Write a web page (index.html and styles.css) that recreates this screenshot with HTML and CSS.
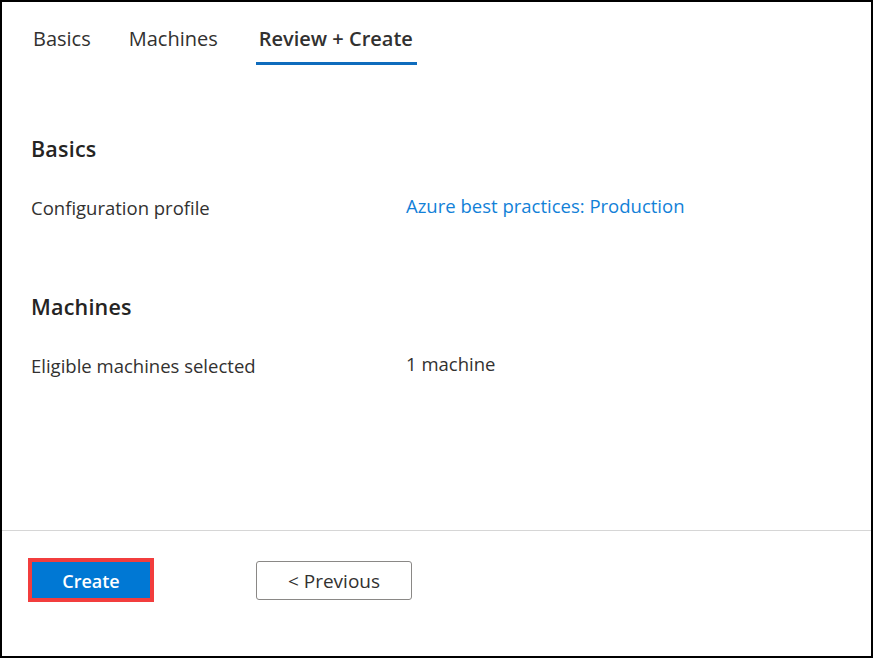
FILE: index.html
```html
<!DOCTYPE html>
<html>
<head>
<meta charset="utf-8">
<link rel="stylesheet" href="styles.css">
</head>
<body>
<div class="frame">
  <nav class="tabs">
    <span class="tab">Basics</span>
    <span class="tab">Machines</span>
    <span class="tab active">Review + Create</span>
  </nav>
  <main class="content">
    <section class="group">
      <h2 class="heading">Basics</h2>
      <div class="row">
        <span class="label">Configuration profile</span>
        <a class="value link">Azure best practices: Production</a>
      </div>
    </section>
    <section class="group">
      <h2 class="heading">Machines</h2>
      <div class="row">
        <span class="label">Eligible machines selected</span>
        <span class="value">1 machine</span>
      </div>
    </section>
  </main>
  <footer class="footer">
    <button class="btn primary">Create</button>
    <button class="btn secondary">&lt; Previous</button>
  </footer>
</div>
</body>
</html>
```
FILE: styles.css
```css
html, body {
  margin: 0;
  padding: 0;
  background: #fff;
}
body {
  font-family: "Open Sans", "Noto Sans", sans-serif;
  color: #323130;
}
.frame {
  box-sizing: border-box;
  width: 873px;
  height: 658px;
  border: 2px solid #000;
  display: flex;
  flex-direction: column;
}
.tabs {
  display: flex;
  padding: 0 0 0 28px;
  height: 63px;
  align-items: stretch;
  flex: none;
}
.tab {
  font-size: 20px;
  line-height: 27px;
  color: #323130;
  padding: 23px 3px 10px;
  margin-right: 32px;
  box-sizing: border-box;
  height: 63px;
}
.tab.active {
  font-weight: 600;
  margin-left: 3px;
  padding: 23px 4px 10px 3px;
  border-bottom: 3px solid #0f6cbd;
}
.content {
  flex: 1;
  padding: 0 0 0 29px;
}
.group {
  display: flex;
  flex-direction: column;
}
.heading {
  margin: 0;
  font-size: 21.5px;
  line-height: 28px;
  font-weight: 600;
  color: #252423;
  letter-spacing: 0.2px;
}
.group:first-child .heading { margin-top: 70px; }
.group + .group .heading { margin-top: 73px; }
.row {
  display: flex;
  align-items: flex-start;
  margin-top: 33px;
  font-size: 18.5px;
  line-height: 24px;
}
.label {
  width: 375px;
  flex: none;
}
.value {
  margin-top: -2px;
}
.link {
  color: #1281d8;
}
.footer {
  flex: none;
  border-top: 1px solid #d6d6d6;
  height: 126px;
  box-sizing: border-box;
  display: flex;
  align-items: flex-start;
  padding: 27px 0 0 26px;
  gap: 102px;
}
.btn {
  font-family: "Open Sans", "Noto Sans", sans-serif;
  box-sizing: border-box;
  cursor: pointer;
  padding: 0;
}
.primary {
  width: 126px;
  height: 44px;
  font-size: 18px;
  background: #0078d4;
  color: #fff;
  font-weight: 600;
  border: 4px solid #f23d3d;
  border-radius: 0;
  padding-top: 2px;
}
.secondary {
  margin-top: 3px;
  width: 156px;
  height: 39px;
  font-size: 19px;
  background: #fff;
  color: #323130;
  border: 1px solid #8a8886;
  border-radius: 3px;
}
```
